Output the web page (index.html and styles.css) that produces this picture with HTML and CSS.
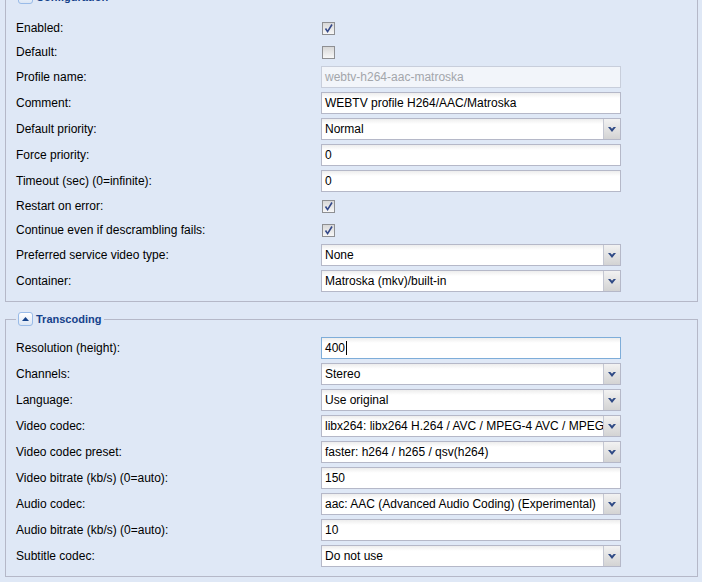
FILE: index.html
```html
<html>
<head>
<meta charset="utf-8">
<title>Profile</title>
<link rel="stylesheet" href="styles.css">
</head>
<body>
<div class="page">

<fieldset class="group top">
    <legend><span class="tool"><svg width="7" height="4" viewBox="0 0 7 4"><path d="M0 4 L3.5 0 L7 4 Z" fill="#15428b"/></svg></span>Configuration</legend>

    <div class="row check">
        <label>Enabled:</label>
        <span class="box"><svg width="11" height="11" viewBox="0 0 11 11"><path d="M2.5 5.5 L4.6 8.6 L9 1.5" fill="none" stroke="#34498a" stroke-width="1.6"/></svg></span>
    </div>
    <div class="row check">
        <label>Default:</label>
        <span class="box"></span>
    </div>
    <div class="row">
        <label>Profile name:</label>
        <div class="field disabled">webtv-h264-aac-matroska</div>
    </div>
    <div class="row">
        <label>Comment:</label>
        <div class="field">WEBTV profile H264/AAC/Matroska</div>
    </div>
    <div class="row">
        <label>Default priority:</label>
        <div class="field combo"><span class="value">Normal</span><span class="trigger"><svg width="8" height="5" viewBox="0 0 8 5"><path d="M0 0 H2.3 L4 1.8 L5.7 0 H8 L4 5 Z" fill="#2f4a85"/></svg></span></div>
    </div>
    <div class="row">
        <label>Force priority:</label>
        <div class="field">0</div>
    </div>
    <div class="row">
        <label>Timeout (sec) (0=infinite):</label>
        <div class="field">0</div>
    </div>
    <div class="row check">
        <label>Restart on error:</label>
        <span class="box"><svg width="11" height="11" viewBox="0 0 11 11"><path d="M2.5 5.5 L4.6 8.6 L9 1.5" fill="none" stroke="#34498a" stroke-width="1.6"/></svg></span>
    </div>
    <div class="row check">
        <label>Continue even if descrambling fails:</label>
        <span class="box"><svg width="11" height="11" viewBox="0 0 11 11"><path d="M2.5 5.5 L4.6 8.6 L9 1.5" fill="none" stroke="#34498a" stroke-width="1.6"/></svg></span>
    </div>
    <div class="row">
        <label>Preferred service video type:</label>
        <div class="field combo"><span class="value">None</span><span class="trigger"><svg width="8" height="5" viewBox="0 0 8 5"><path d="M0 0 H2.3 L4 1.8 L5.7 0 H8 L4 5 Z" fill="#2f4a85"/></svg></span></div>
    </div>
    <div class="row">
        <label>Container:</label>
        <div class="field combo"><span class="value">Matroska (mkv)/built-in</span><span class="trigger"><svg width="8" height="5" viewBox="0 0 8 5"><path d="M0 0 H2.3 L4 1.8 L5.7 0 H8 L4 5 Z" fill="#2f4a85"/></svg></span></div>
    </div>
</fieldset>

<fieldset class="group">
    <legend><span class="tool"><svg width="7" height="4" viewBox="0 0 7 4"><path d="M0 4 L3.5 0 L7 4 Z" fill="#15428b"/></svg></span>Transcoding</legend>

    <div class="row">
        <label>Resolution (height):</label>
        <div class="field focus">400<span class="caret"></span></div>
    </div>
    <div class="row">
        <label>Channels:</label>
        <div class="field combo"><span class="value">Stereo</span><span class="trigger"><svg width="8" height="5" viewBox="0 0 8 5"><path d="M0 0 H2.3 L4 1.8 L5.7 0 H8 L4 5 Z" fill="#2f4a85"/></svg></span></div>
    </div>
    <div class="row">
        <label>Language:</label>
        <div class="field combo"><span class="value">Use original</span><span class="trigger"><svg width="8" height="5" viewBox="0 0 8 5"><path d="M0 0 H2.3 L4 1.8 L5.7 0 H8 L4 5 Z" fill="#2f4a85"/></svg></span></div>
    </div>
    <div class="row">
        <label>Video codec:</label>
        <div class="field combo"><span class="value">libx264: libx264 H.264 / AVC / MPEG-4 AVC / MPEG-4 part 10</span><span class="trigger"><svg width="8" height="5" viewBox="0 0 8 5"><path d="M0 0 H2.3 L4 1.8 L5.7 0 H8 L4 5 Z" fill="#2f4a85"/></svg></span></div>
    </div>
    <div class="row">
        <label>Video codec preset:</label>
        <div class="field combo"><span class="value">faster: h264 / h265 / qsv(h264)</span><span class="trigger"><svg width="8" height="5" viewBox="0 0 8 5"><path d="M0 0 H2.3 L4 1.8 L5.7 0 H8 L4 5 Z" fill="#2f4a85"/></svg></span></div>
    </div>
    <div class="row">
        <label>Video bitrate (kb/s) (0=auto):</label>
        <div class="field">150</div>
    </div>
    <div class="row">
        <label>Audio codec:</label>
        <div class="field combo"><span class="value">aac: AAC (Advanced Audio Coding) (Experimental)</span><span class="trigger"><svg width="8" height="5" viewBox="0 0 8 5"><path d="M0 0 H2.3 L4 1.8 L5.7 0 H8 L4 5 Z" fill="#2f4a85"/></svg></span></div>
    </div>
    <div class="row">
        <label>Audio bitrate (kb/s) (0=auto):</label>
        <div class="field">10</div>
    </div>
    <div class="row">
        <label>Subtitle codec:</label>
        <div class="field combo"><span class="value">Do not use</span><span class="trigger"><svg width="8" height="5" viewBox="0 0 8 5"><path d="M0 0 H2.3 L4 1.8 L5.7 0 H8 L4 5 Z" fill="#2f4a85"/></svg></span></div>
    </div>
</fieldset>

</div>
</body>
</html>
```

FILE: styles.css
```css
html, body {
    margin: 0px;
    background-color: #dfe8f6;
}

body {
    font-family: "Liberation Sans", Arial, sans-serif;
    font-size: 12px;
    color: #000;
}

/* the panel is scrolled a little, only the bottom of the first legend shows */
.page {
    margin: -10px 4px 0px 5px;
}

.group {
    margin: 0px 0px 10px 0px;
    padding: 11px 10px 5px 10px;
    border: 1px solid #b5b8c8;
    min-width: 0px;
}

.group.top {
    padding-top: 14px;
}

.group legend {
    display: flex;
    align-items: center;
    height: 14px;
    padding: 0px 3px 0px 2px;
    font-size: 11px;
    font-weight: bold;
    color: #15428b;
}

.tool {
    display: flex;
    align-items: center;
    justify-content: center;
    box-sizing: border-box;
    width: 15px;
    height: 14px;
    margin-right: 3px;
    border: 1px solid #99bbe8;
    border-radius: 3px;
    background: linear-gradient(#ffffff, #dbe6f5);
}

.row {
    display: flex;
    align-items: center;
    height: 22px;
    margin-bottom: 4px;
}

.row.check {
    height: 20px;
}

.row label {
    width: 305px;
    flex: none;
    line-height: 15px;
    padding-top: 1px;
}

.box {
    display: flex;
    align-items: center;
    justify-content: center;
    box-sizing: border-box;
    width: 13px;
    height: 13px;
    margin-left: 1px;
    border: 1px solid #8e8f92;
    background: linear-gradient(#d8d8d8, #f7f7f7);
}

.field {
    box-sizing: border-box;
    width: 300px;
    height: 22px;
    padding: 0px 3px;
    border: 1px solid #b5b8c8;
    background: #fff linear-gradient(#ededed, #ffffff 5px);
    line-height: 20px;
    white-space: nowrap;
    overflow: hidden;
}

.field.disabled {
    color: #a3a6ab;
    border-color: #c8cedb;
    background: #f2f5fa;
}

.field.focus {
    border-color: #7eadd9;
}

.caret {
    display: inline-block;
    width: 1px;
    height: 14px;
    margin-left: 1px;
    vertical-align: -3px;
    background-color: #000;
}

.field.combo {
    display: flex;
    padding: 0px;
}

.combo .value {
    flex: 1;
    padding: 0px 3px;
    overflow: hidden;
}

.trigger {
    display: flex;
    align-items: center;
    justify-content: center;
    flex: none;
    width: 16px;
    border-left: 1px solid #c4c7d2;
    background: linear-gradient(#f2f2f2, #d3d3d3);
}
```
